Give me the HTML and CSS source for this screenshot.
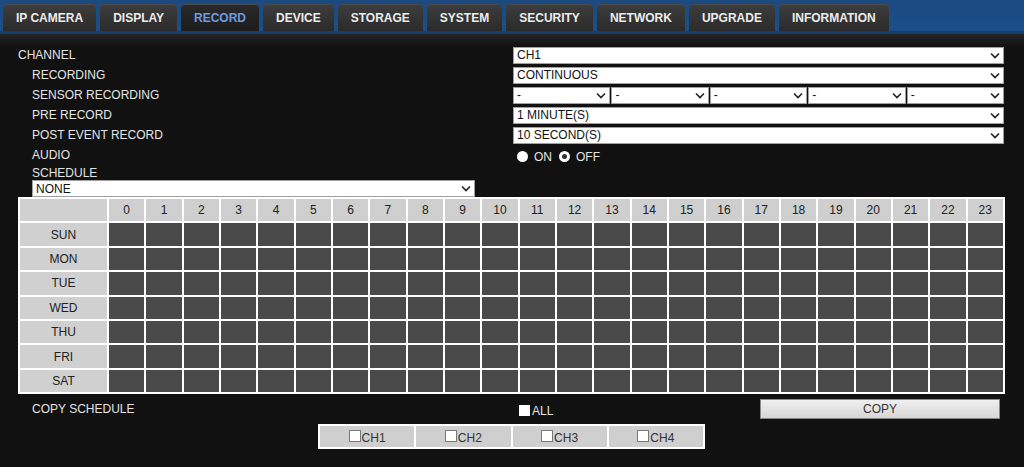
FILE: index.html
```html
<!DOCTYPE html>
<html>
<head>
<meta charset="utf-8">
<link rel="stylesheet" href="styles.css">
</head>
<body>
<div class="topbar">
  <nav class="tabs">
    <div class="tab">IP CAMERA</div>
    <div class="tab">DISPLAY</div>
    <div class="tab active">RECORD</div>
    <div class="tab">DEVICE</div>
    <div class="tab">STORAGE</div>
    <div class="tab">SYSTEM</div>
    <div class="tab">SECURITY</div>
    <div class="tab">NETWORK</div>
    <div class="tab">UPGRADE</div>
    <div class="tab">INFORMATION</div>
  </nav>
</div>
<main class="content">
  <div class="row">
    <div class="label">CHANNEL</div>
    <div class="sel full"><span>CH1</span><svg class="chev" viewBox="0 0 10 6"><path d="M1 1l4 4 4-4"/></svg></div>
  </div>
  <div class="row">
    <div class="label ind">RECORDING</div>
    <div class="sel full"><span>CONTINUOUS</span><svg class="chev" viewBox="0 0 10 6"><path d="M1 1l4 4 4-4"/></svg></div>
  </div>
  <div class="row">
    <div class="label ind">SENSOR RECORDING</div>
    <div class="multi">
      <div class="sel"><span>-</span><svg class="chev" viewBox="0 0 10 6"><path d="M1 1l4 4 4-4"/></svg></div>
      <div class="sel"><span>-</span><svg class="chev" viewBox="0 0 10 6"><path d="M1 1l4 4 4-4"/></svg></div>
      <div class="sel"><span>-</span><svg class="chev" viewBox="0 0 10 6"><path d="M1 1l4 4 4-4"/></svg></div>
      <div class="sel"><span>-</span><svg class="chev" viewBox="0 0 10 6"><path d="M1 1l4 4 4-4"/></svg></div>
      <div class="sel"><span>-</span><svg class="chev" viewBox="0 0 10 6"><path d="M1 1l4 4 4-4"/></svg></div>
    </div>
  </div>
  <div class="row">
    <div class="label ind">PRE RECORD</div>
    <div class="sel full"><span>1 MINUTE(S)</span><svg class="chev" viewBox="0 0 10 6"><path d="M1 1l4 4 4-4"/></svg></div>
  </div>
  <div class="row">
    <div class="label ind">POST EVENT RECORD</div>
    <div class="sel full"><span>10 SECOND(S)</span><svg class="chev" viewBox="0 0 10 6"><path d="M1 1l4 4 4-4"/></svg></div>
  </div>
  <div class="row">
    <div class="label ind">AUDIO</div>
    <div class="radios">
      <span class="radio"></span><span class="rtext">ON</span>
      <span class="radio checked"></span><span class="rtext">OFF</span>
    </div>
  </div>
  <div class="label ind sched-label">SCHEDULE</div>
  <div class="sel sched"><span>NONE</span><svg class="chev" viewBox="0 0 10 6"><path d="M1 1l4 4 4-4"/></svg></div>
  <table class="grid">
    <thead>
      <tr>
        <th class="day"></th>
        <th>0</th><th>1</th><th>2</th><th>3</th><th>4</th><th>5</th><th>6</th><th>7</th>
        <th>8</th><th>9</th><th>10</th><th>11</th><th>12</th><th>13</th><th>14</th><th>15</th>
        <th>16</th><th>17</th><th>18</th><th>19</th><th>20</th><th>21</th><th>22</th><th>23</th>
      </tr>
    </thead>
    <tbody id="gbody"></tbody>
  </table>
  <div class="copyrow">
    <div class="copylabel">COPY SCHEDULE</div>
    <div class="all"><span class="cb white"></span>ALL</div>
    <div class="copybtn">COPY</div>
  </div>
  <div class="chrow">
    <div class="ch"><span class="cb"></span>CH1</div>
    <div class="ch"><span class="cb"></span>CH2</div>
    <div class="ch"><span class="cb"></span>CH3</div>
    <div class="ch"><span class="cb"></span>CH4</div>
  </div>
</main>
<script src="script.js"></script>
</body>
</html>
```
FILE: script.js
```js
(function () {
  var days = ["SUN", "MON", "TUE", "WED", "THU", "FRI", "SAT"];
  var body = document.getElementById("gbody");
  days.forEach(function (d) {
    var tr = document.createElement("tr");
    var th = document.createElement("th");
    th.className = "day";
    th.textContent = d;
    tr.appendChild(th);
    for (var i = 0; i < 24; i++) {
      var td = document.createElement("td");
      tr.appendChild(td);
    }
    body.appendChild(tr);
  });
})();
```
FILE: styles.css
```css
* { box-sizing: border-box; }
html, body {
  margin: 0;
  padding: 0;
  background: #111111;
  font-family: "Liberation Sans", Arial, sans-serif;
  font-size: 12px;
  color: #e0e0e0;
  width: 1024px;
  height: 467px;
  overflow: hidden;
}
.topbar {
  height: 34px;
  background: linear-gradient(#1a4a80, #1b4f88);
  border-bottom: 3px solid #163e6a;
  padding: 4px 0 0 3px;
}
.tabs {
  display: flex;
  gap: 4px;
  height: 27px;
}
.tab {
  padding: 0 13px;
  height: 27px;
  line-height: 28px;
  font-weight: bold;
  font-size: 12px;
  color: #ececec;
  background: linear-gradient(#3d3d3d, #2b2b2b);
  border-radius: 4px 4px 0 0;
  box-shadow: inset 0 1px 0 #4a4a4a;
  white-space: nowrap;
}
.tab.active {
  color: #6e9be0;
  background: linear-gradient(#2a2a2a, #1c1c1c);
}
.content {
  background: linear-gradient(#262626 0, #111111 12px);
  padding: 11px 0 0 18px;
  height: 433px;
}
.row {
  display: flex;
  align-items: center;
  height: 20px;
}
.label {
  width: 495px;
  white-space: nowrap;
  color: #e4e4e4;
}
.label.ind { padding-left: 14px; }
.sel {
  display: flex;
  align-items: center;
  justify-content: space-between;
  height: 17px;
  background: #ffffff;
  border: 1px solid #a0a0a0;
  color: #111;
  padding: 0 3px 0 3px;
  font-size: 12px;
}
.sel.full { width: 491px; }
.chev {
  width: 10px;
  height: 7px;
  fill: none;
  stroke: #222;
  stroke-width: 1.6;
}
.multi {
  display: flex;
  gap: 1px;
  width: 491px;
}
.multi .sel { flex: 1; }
.radios {
  display: flex;
  align-items: center;
  padding-left: 4px;
  padding-top: 3px;
}
.radio {
  width: 11px;
  height: 11px;
  border-radius: 50%;
  background: #ffffff;
  margin-right: 6px;
}
.radio.checked {
  background: #fff;
  border: 3px solid #ffffff;
  position: relative;
}
.radio.checked::after {
  content: "";
  position: absolute;
  left: 0;
  top: 0;
  width: 5px;
  height: 5px;
  border-radius: 50%;
  background: #333;
}
.rtext { margin-right: 7px; color: #e4e4e4; }
.sched-label {
  height: 14px;
  line-height: 14px;
  margin-top: 1px;
}
.sel.sched {
  width: 443px;
  margin-left: 14px;
  height: 17px;
}
.grid {
  border-collapse: separate;
  border-spacing: 2px;
  background: #ffffff;
  width: 987px;
  table-layout: fixed;
  margin-left: 0;
}
.grid tr { height: 22.4px; }
.grid th, .grid td {
  padding: 0;
  font-weight: normal;
  font-size: 12px;
  color: #222;
  text-align: center;
}
.grid th { background: #cfcfcf; }
.grid th.day { width: 87px; background: #d0d0d0; }
.grid td { background: #4a4a4a; }
.copyrow {
  display: flex;
  align-items: center;
  height: 26px;
  padding-top: 3px;
}
.copylabel {
  width: 501px;
  padding-left: 14px;
  color: #e4e4e4;
}
.all {
  display: flex;
  align-items: center;
  width: 241px;
  padding-top: 4px;
  color: #e4e4e4;
}
.cb {
  display: inline-block;
  width: 12px;
  height: 12px;
  background: #fff;
  border: 1px solid #777;
  margin-right: 2px;
}
.cb.white { border-color: #fff; width: 11px; height: 11px; }
.copybtn {
  width: 240px;
  height: 20px;
  line-height: 18px;
  text-align: center;
  color: #333;
  background: linear-gradient(#f0f0f0, #d6d6d6);
  border: 1px solid #888;
}
.chrow {
  display: flex;
  gap: 2px;
  margin-left: 300px;
  margin-top: 4px;
  width: 387px;
  height: 25px;
  background: #ffffff;
  padding: 2px;
}
.ch {
  flex: 1;
  background: #cfcfcf;
  color: #333;
  display: flex;
  align-items: center;
  justify-content: center;
  padding-top: 2px;
}
.ch .cb { margin-right: 1px; margin-top: -4px; }
```
